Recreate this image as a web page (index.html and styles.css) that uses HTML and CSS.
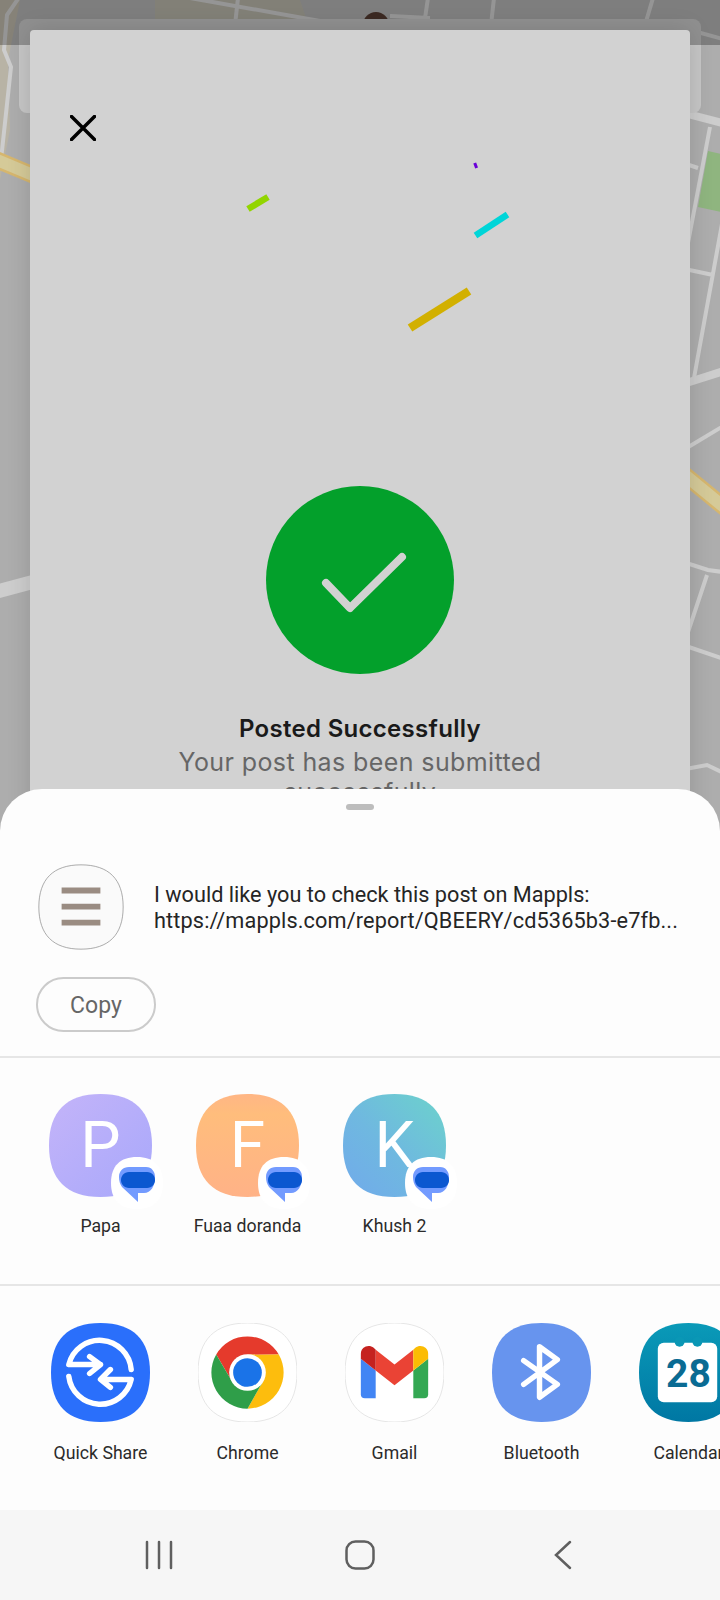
FILE: index.html
```html
<!DOCTYPE html>
<html lang="en">
<head>
<meta charset="utf-8">
<title>Posted Successfully</title>
<link rel="stylesheet" href="styles.css">
</head>
<body>
<svg class="defs" width="0" height="0" aria-hidden="true">
  <defs>
    <path id="sq" d="M50 0C83 0 100 17 100 50C100 83 83 100 50 100C17 100 0 83 0 50C0 17 17 0 50 0Z"/>
    <linearGradient id="gp" x1="0" y1="0" x2="1" y2="1"><stop offset="0" stop-color="#c4b4f9"/><stop offset="1" stop-color="#a8a8fb"/></linearGradient>
    <linearGradient id="gf" x1="0" y1="0" x2="0" y2="1"><stop offset="0" stop-color="#ffb685"/><stop offset=".2" stop-color="#ffbd7c"/><stop offset="1" stop-color="#ffb287"/></linearGradient>
    <linearGradient id="gk" x1="1" y1="0" x2="0" y2="1"><stop offset="0" stop-color="#6cd3cb"/><stop offset=".55" stop-color="#6fb8e0"/><stop offset="1" stop-color="#71aaeb"/></linearGradient>
    <linearGradient id="gc" x1="0" y1="0" x2="0" y2="1"><stop offset="0" stop-color="#0a9ab8"/><stop offset="1" stop-color="#0077a3"/></linearGradient>
    <symbol id="msg" viewBox="0 0 52 52">
      <path d="M26 0C43 0 52 9 52 26C52 43 43 52 26 52C9 52 0 43 0 26C0 9 9 0 26 0Z" fill="#fff"/>
      <path d="M18 10H35C41 10 44 15 44 20C44 29 40 36 33 36H27V45L11 30C9 27 8 24 8 20C8 14 12 10 18 10Z" fill="#739bff"/>
      <path d="M18 15H36C41 15 44 19 44 23C44 27 41 31 36 31H18C13 31 10 27 10 23C10 19 13 15 18 15Z" fill="#0b57d0"/>
    </symbol>
  </defs>
</svg>
<main class="screen">
  <svg class="map" viewBox="0 0 720 1600" width="720" height="1600" aria-hidden="true">
    <rect width="720" height="1600" fill="#adadad"/>
    <path d="M155 0H300L310 30H155Z" fill="#b3b0a4"/>
    <path d="M0 0H20L8 60L10 130L0 180Z" fill="#b8b3a5"/>
    <path d="M708 151L730 156V214L698 207Z" fill="#8fb57f"/>
    <g class="road-w">
      <path d="M20 -4L7 15L4 50L11 67L1 160" stroke-width="4"/>
      <path d="M190 -2L320 21M238 -2L235 25M428 -2L424 25M494 -2L491 25M653 -2L645 25M390 16L430 18M690 30L730 41" stroke-width="4"/>
      <path d="M680 112L730 125" stroke-width="8"/>
      <path d="M710 127L680 285M680 162L698 168M722 224L694 378M680 268L713 275M680 452L730 422" stroke-width="4"/>
      <path d="M680 385L730 369" stroke-width="8"/>
      <path d="M680 561L708 570L730 573M707 575L682 650M680 644L730 661M680 770L707 765L730 776" stroke-width="4"/>
      <path d="M-5 592L40 580" stroke-width="14"/>
    </g>
    <g class="road-y">
      <path d="M-10 157L40 178M680 471L730 512" stroke="#d6b66e" stroke-width="17"/>
      <path d="M-10 157L40 178M680 471L730 512" stroke="#d5ca98" stroke-width="12"/>
    </g>
    <circle cx="376" cy="25" r="13" fill="#52392f"/>
  </svg>
  <div class="back-card"></div>
  <div class="band"></div>
  <section class="modal">
    <svg class="confetti" viewBox="30 30 660 400" width="660" height="400" aria-hidden="true">
      <path d="M469 291L410 328" stroke="#d2b000" stroke-width="8.500"/>
      <path d="M507.500 214.500L475.500 235.500" stroke="#00d5d8" stroke-width="6.500"/>
      <path d="M268 197L248 209" stroke="#92d500" stroke-width="6.500"/>
      <path d="M474.700 163L476.600 168" stroke="#6a00d8" stroke-width="3"/>
    </svg>
    <button class="close" type="button" aria-label="Close">
      <svg viewBox="0 0 26 26" width="26" height="26"><path d="M1.500 1.500L24.500 24.500M24.500 1.500L1.500 24.500" stroke="#000" stroke-width="3.500" stroke-linecap="round"/></svg>
    </button>
    <div class="check">
      <svg viewBox="0 0 188 188" width="188" height="188"><circle cx="94" cy="94" r="94" fill="#03a02b"/><path d="M60 97L84 122L136 71" fill="none" stroke="#d2d2d2" stroke-width="8" stroke-linecap="round" stroke-linejoin="round"/></svg>
    </div>
    <h1 class="title">Posted Successfully</h1>
    <p class="sub">Your post has been submitted successfully</p>
  </section>
  <div class="bottom">
    <section class="sheet">
      <div class="handle"></div>
      <div class="preview">
        <svg class="thumb" viewBox="-1 -1 102 102" width="86" height="86" aria-hidden="true">
          <use href="#sq" fill="#fafafa" stroke="#9c9c9c" stroke-width="1"/>
          <path d="M27 27H73V34H27ZM27 46H73V53H27ZM27 65H73V72H27Z" fill="#9a8c82"/>
        </svg>
        <p class="share-text">I would like you to check this post on Mappls:<br><span class="share-link">https://mappls.com/report/QBEERY/cd5365b3-e7fb...</span></p>
      </div>
      <button class="copy" type="button">Copy</button>
      <div class="contacts row">
        <div class="item">
          <div class="avatar">
            <svg class="tile" viewBox="0 0 100 100"><use href="#sq" fill="url(#gp)"/></svg>
            <span class="letter">P</span>
            <svg class="badge" width="52" height="52"><use href="#msg"/></svg>
          </div>
          <span class="label">Papa</span>
        </div>
        <div class="item">
          <div class="avatar">
            <svg class="tile" viewBox="0 0 100 100"><use href="#sq" fill="url(#gf)"/></svg>
            <span class="letter">F</span>
            <svg class="badge" width="52" height="52"><use href="#msg"/></svg>
          </div>
          <span class="label">Fuaa doranda</span>
        </div>
        <div class="item">
          <div class="avatar">
            <svg class="tile" viewBox="0 0 100 100"><use href="#sq" fill="url(#gk)"/></svg>
            <span class="letter">K</span>
            <svg class="badge" width="52" height="52"><use href="#msg"/></svg>
          </div>
          <span class="label">Khush 2</span>
        </div>
      </div>
      <div class="apps row">
        <div class="item">
          <svg class="app" viewBox="0 0 100 100">
            <use href="#sq" fill="#2a6ffb"/>
            <g fill="none" stroke="#fff" stroke-width="5.500" stroke-linecap="round" stroke-linejoin="round">
              <path d="M81 47A32 32 0 0 0 18 42H50M39 34L50 42L39 51"/>
              <path d="M18 54A32 32 0 0 0 81 57H51M60 47L50 57L60 65"/>
            </g>
          </svg>
          <span class="label">Quick Share</span>
        </div>
        <div class="item">
          <svg class="app" viewBox="0 0 100 100">
            <use href="#sq" fill="#fff" stroke="#e6e6e6" stroke-width="1"/>
            <path d="M18.400 31.750A36.500 36.500 0 0 1 81.600 31.750L50 32L34.400 59Z" fill="#e53a2c"/>
            <path d="M81.600 31.750A36.500 36.500 0 0 1 50 86.500L65.600 59L50 32Z" fill="#fdbd0d"/>
            <path d="M50 86.500A36.500 36.500 0 0 1 18.400 31.750L34.400 59L65.600 59Z" fill="#2f9e49"/>
            <circle cx="50" cy="50" r="18.500" fill="#fff"/>
            <circle cx="50" cy="50" r="14.500" fill="#1a73e8"/>
          </svg>
          <span class="label">Chrome</span>
        </div>
        <div class="item">
          <svg class="app" viewBox="0 0 100 100">
            <use href="#sq" fill="#fff" stroke="#e6e6e6" stroke-width="1"/>
            <path d="M16 36L31 48V76H20A4 4 0 0 1 16 72Z" fill="#4285f4"/>
            <path d="M84 36L69 48V76H80A4 4 0 0 0 84 72Z" fill="#34a853"/>
            <path d="M31 27L50 42L69 27V48L50 63L31 48Z" fill="#ea4335"/>
            <path d="M16 36V31C16 24 24 21 29 25L31 27V48Z" fill="#c5221f"/>
            <path d="M84 36V31C84 24 76 21 71 25L69 27V48Z" fill="#fbbc04"/>
          </svg>
          <span class="label">Gmail</span>
        </div>
        <div class="item">
          <svg class="app" viewBox="0 0 100 100">
            <use href="#sq" fill="#6794ee"/>
            <path d="M32 38L66 62L48 75V24L66 37L32 62" fill="none" stroke="#fff" stroke-width="5.500" stroke-linecap="round" stroke-linejoin="round"/>
          </svg>
          <span class="label">Bluetooth</span>
        </div>
        <div class="item">
          <div class="cal">
            <svg class="app" viewBox="0 0 100 100">
              <use href="#sq" fill="url(#gc)"/>
              <rect x="19" y="20" width="60" height="60" rx="6" fill="#fff"/>
              <circle cx="41" cy="19" r="5" fill="#0a97b5"/>
              <circle cx="59" cy="19" r="5" fill="#0a97b5"/>
            </svg>
            <span class="cal-num">28</span>
          </div>
          <span class="label">Calendar</span>
        </div>
      </div>
    </section>
    <nav class="nav" aria-label="System navigation">
      <svg viewBox="0 0 28 30" width="28" height="30"><path d="M2 2V28M14 2V28M26 2V28" stroke="#5f5f5f" stroke-width="2.500" stroke-linecap="round"/></svg>
      <svg viewBox="0 0 30 30" width="30" height="30"><rect x="1.500" y="1.500" width="27" height="27" rx="9" fill="none" stroke="#5f5f5f" stroke-width="2.500"/></svg>
      <svg class="back" viewBox="0 0 18 30" width="18" height="30"><path d="M16 2L2 15L16 28" fill="none" stroke="#5f5f5f" stroke-width="2.500" stroke-linecap="round" stroke-linejoin="miter"/></svg>
    </nav>
  </div>
</main>
</body>
</html>
```

FILE: styles.css
```css
* { box-sizing: border-box; }
html, body { margin: 0; padding: 0; }
body { width: 720px; height: 1600px; overflow: hidden; font-family: Roboto, "Liberation Sans", sans-serif; }
.defs { position: absolute; }
.screen { position: relative; width: 720px; height: 1600px; overflow: hidden; }
.map { position: absolute; left: 0; top: 0; display: block; }
.road-w path { fill: none; stroke: #cdcdcd; }
.road-y path { fill: none; }
.back-card { position: absolute; left: 19px; top: 19px; width: 682px; height: 94px; background: #c6c6c6; border-radius: 8px; }
.band { position: absolute; left: 0; top: 0; width: 720px; height: 45px; background: rgba(0, 0, 0, .27); }
.modal { position: absolute; left: 30px; top: 30px; width: 660px; height: 1000px; background: #d2d2d2; border-radius: 4px; box-shadow: 0 0 24px rgba(0, 0, 0, .14); display: flex; flex-direction: column; align-items: center; padding-top: 85px; }
.confetti { position: absolute; left: 0; top: 0; display: block; }
.close { align-self: flex-start; margin: 0 0 0 40px; padding: 0; width: 26px; height: 26px; border: 0; background: none; display: block; }
.close svg, .check svg { display: block; }
.check { margin-top: 345px; }
.title { margin: 40px 0 0; font: 600 24px/30px Inter, "Open Sans", sans-serif; letter-spacing: .3px; color: #1a1a1a; text-align: center; }
.sub { margin: 3px 0 0; width: 420px; font: 400 25px/30px Inter, "Open Sans", sans-serif; letter-spacing: .4px; color: #666; text-align: center; }
.bottom { position: absolute; left: 0; bottom: 0; width: 720px; display: flex; flex-direction: column; }
.sheet { height: 721px; background: #fdfdfd; border-radius: 42px 42px 0 0; padding-top: 15px; overflow: hidden; }
.handle { width: 28px; height: 6px; margin: 0 auto; background: #bdbdbd; border-radius: 3px; }
.preview { display: flex; align-items: center; gap: 30px; margin: 54px 0 0 38px; height: 85px; }
.thumb { display: block; flex: none; }
.share-text { margin: 0; font-size: 21.7px; line-height: 26px; color: #252525; white-space: nowrap; padding-top: 3px; }
.share-link { letter-spacing: .13px; }
.copy { display: block; margin: 28px 0 24px 36px; width: 120px; height: 55px; border: 2px solid #cbcbcb; border-radius: 28px; background: none; font: 400 23px Roboto, sans-serif; color: #666; padding: 2px 0 0; }
.row { display: flex; padding-left: 27px; border-top: 2px solid #e6e6e6; overflow: hidden; }
.contacts { height: 228px; padding-top: 36px; }
.apps { height: 226px; padding-top: 37px; }
.item { flex: none; width: 147px; display: flex; flex-direction: column; align-items: center; }
.avatar { position: relative; width: 103px; height: 103px; display: flex; align-items: center; justify-content: center; }
.tile { position: absolute; left: 0; top: 0; width: 103px; height: 103px; display: block; }
.letter { position: relative; font-size: 64px; font-weight: 400; line-height: 1; color: #fff; }
.badge { position: absolute; left: 62px; top: 63px; display: block; }
.label { margin-top: 19px; font-size: 17.7px; line-height: 20px; color: #2b2b2b; white-space: nowrap; }
.apps .label { margin-top: 21px; }
.app { width: 99px; height: 99px; display: block; }
.cal { position: relative; width: 99px; height: 99px; }
.cal-num { position: absolute; left: 0; right: 0; top: 20px; height: 59px; text-align: center; font-size: 39px; font-weight: 700; line-height: 63px; color: #0a6b93; }
.nav { height: 90px; background: #f6f6f6; display: flex; align-items: center; padding-left: 145px; gap: 172px; }
.nav svg { display: block; }
.back { margin-left: 7px; }
```
